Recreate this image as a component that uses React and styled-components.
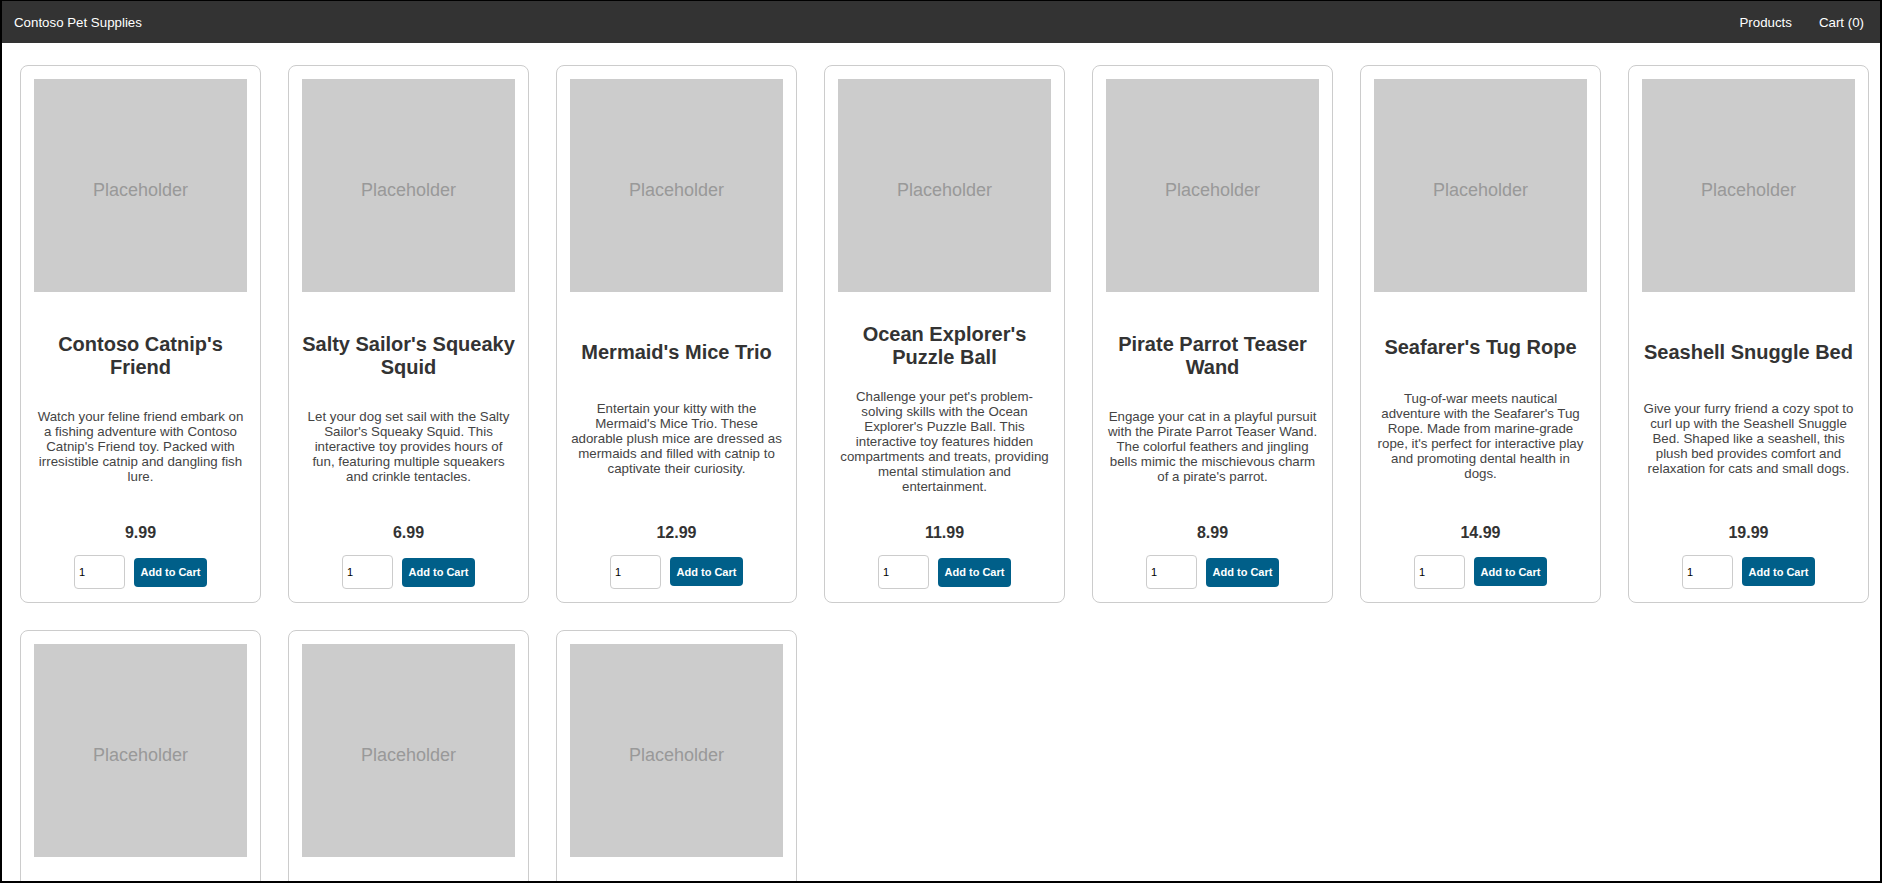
import React from "react";
import styled, { createGlobalStyle } from "styled-components";

const GlobalStyle = createGlobalStyle`
  body {
    margin: 0;
    font-family: "Liberation Sans", Arial, sans-serif;
    background: #ffffff;
  }
`;

const Frame = styled.div`
  height: 100vh;
  box-sizing: border-box;
  border: 2px solid #000000;
  border-top-width: 1px;
  overflow: hidden;
  display: flex;
  flex-direction: column;
`;

const Header = styled.header`
  flex: none;
  height: 42px;
  background: #333333;
  color: #ffffff;
  display: flex;
  align-items: center;
  justify-content: space-between;
  padding: 0 16px 0 12px;
  font-size: 13.3px;
`;

const Brand = styled.div`
  color: #ffffff;
`;

const Nav = styled.nav`
  display: flex;
  gap: 27px;
`;

const NavLink = styled.a`
  color: #ffffff;
  text-decoration: none;
  cursor: pointer;
`;

const Main = styled.main`
  padding: 22px 0 0 18px;
`;

const ProductGrid = styled.div`
  display: grid;
  grid-template-columns: repeat(auto-fill, 241px);
  gap: 27px;
`;

const Card = styled.div`
  box-sizing: border-box;
  border: 1px solid #cccccc;
  border-radius: 8px;
  padding: 13px;
  text-align: center;
  display: flex;
  flex-direction: column;
  justify-content: space-between;
`;

const Placeholder = styled.div`
  box-sizing: border-box;
  width: 100%;
  aspect-ratio: 1 / 1;
  padding-top: 10px;
  background: #cccccc;
  color: #999999;
  font-size: 18px;
  display: flex;
  align-items: center;
  justify-content: center;
`;

const Title = styled.h3`
  margin: 31px 0 10px;
  font-size: 20px;
  line-height: 23px;
  font-weight: bold;
  color: #333333;
`;

const Description = styled.p`
  margin: 10px 0 30px;
  font-size: 13.3px;
  line-height: 15px;
  color: #444444;
`;

const Footer = styled.div``;

const Price = styled.p`
  margin: 0 0 13px;
  font-size: 16px;
  line-height: 18px;
  font-weight: bold;
  color: #333333;
`;

const Actions = styled.div`
  display: flex;
  align-items: center;
  justify-content: center;
  gap: 9px;
`;

const QtyInput = styled.input`
  box-sizing: border-box;
  width: 51px;
  height: 34px;
  padding: 0 4px;
  border: 1px solid #cccccc;
  border-radius: 4px;
  font-family: "Liberation Sans", Arial, sans-serif;
  font-size: 11px;
  color: #000000;
`;

const AddButton = styled.button`
  box-sizing: border-box;
  width: 73px;
  height: 29px;
  padding: 0;
  border: none;
  border-radius: 4px;
  background: #005f89;
  color: #ffffff;
  font-family: "Liberation Sans", Arial, sans-serif;
  font-size: 11px;
  font-weight: bold;
  cursor: pointer;
`;

const products = [
  {
    name: "Contoso Catnip's Friend",
    description:
      "Watch your feline friend embark on a fishing adventure with Contoso Catnip's Friend toy. Packed with irresistible catnip and dangling fish lure.",
    price: "9.99",
  },
  {
    name: "Salty Sailor's Squeaky Squid",
    description:
      "Let your dog set sail with the Salty Sailor's Squeaky Squid. This interactive toy provides hours of fun, featuring multiple squeakers and crinkle tentacles.",
    price: "6.99",
  },
  {
    name: "Mermaid's Mice Trio",
    description:
      "Entertain your kitty with the Mermaid's Mice Trio. These adorable plush mice are dressed as mermaids and filled with catnip to captivate their curiosity.",
    price: "12.99",
  },
  {
    name: "Ocean Explorer's Puzzle Ball",
    description:
      "Challenge your pet's problem-solving skills with the Ocean Explorer's Puzzle Ball. This interactive toy features hidden compartments and treats, providing mental stimulation and entertainment.",
    price: "11.99",
  },
  {
    name: "Pirate Parrot Teaser Wand",
    description:
      "Engage your cat in a playful pursuit with the Pirate Parrot Teaser Wand. The colorful feathers and jingling bells mimic the mischievous charm of a pirate's parrot.",
    price: "8.99",
  },
  {
    name: "Seafarer's Tug Rope",
    description:
      "Tug-of-war meets nautical adventure with the Seafarer's Tug Rope. Made from marine-grade rope, it's perfect for interactive play and promoting dental health in dogs.",
    price: "14.99",
  },
  {
    name: "Seashell Snuggle Bed",
    description:
      "Give your furry friend a cozy spot to curl up with the Seashell Snuggle Bed. Shaped like a seashell, this plush bed provides comfort and relaxation for cats and small dogs.",
    price: "19.99",
  },
  {
    name: "Lighthouse Scratching Post",
    description:
      "Keep claws busy with the Lighthouse Scratching Post. Wrapped in sisal rope and topped with a glowing beacon toy.",
    price: "24.99",
  },
  {
    name: "Anchor Chew Toy",
    description:
      "A durable rubber anchor that stands up to heavy chewers and floats for water play.",
    price: "7.99",
  },
  {
    name: "Captain's Cat Hammock",
    description:
      "Let your cat lounge like a captain in this sturdy hammock that attaches to any window.",
    price: "16.99",
  },
];

function ProductCard({ product }) {
  return (
    <Card>
      <Placeholder>Placeholder</Placeholder>
      <Title>{product.name}</Title>
      <Description>{product.description}</Description>
      <Footer>
        <Price>{product.price}</Price>
        <Actions>
          <QtyInput type="number" min="1" defaultValue="1" />
          <AddButton>Add to Cart</AddButton>
        </Actions>
      </Footer>
    </Card>
  );
}

export default function App() {
  return (
    <>
      <GlobalStyle />
      <Frame>
        <Header>
          <Brand>Contoso Pet Supplies</Brand>
          <Nav>
            <NavLink>Products</NavLink>
            <NavLink>Cart (0)</NavLink>
          </Nav>
        </Header>
        <Main>
          <ProductGrid>
            {products.map((p) => (
              <ProductCard key={p.name} product={p} />
            ))}
          </ProductGrid>
        </Main>
      </Frame>
    </>
  );
}
